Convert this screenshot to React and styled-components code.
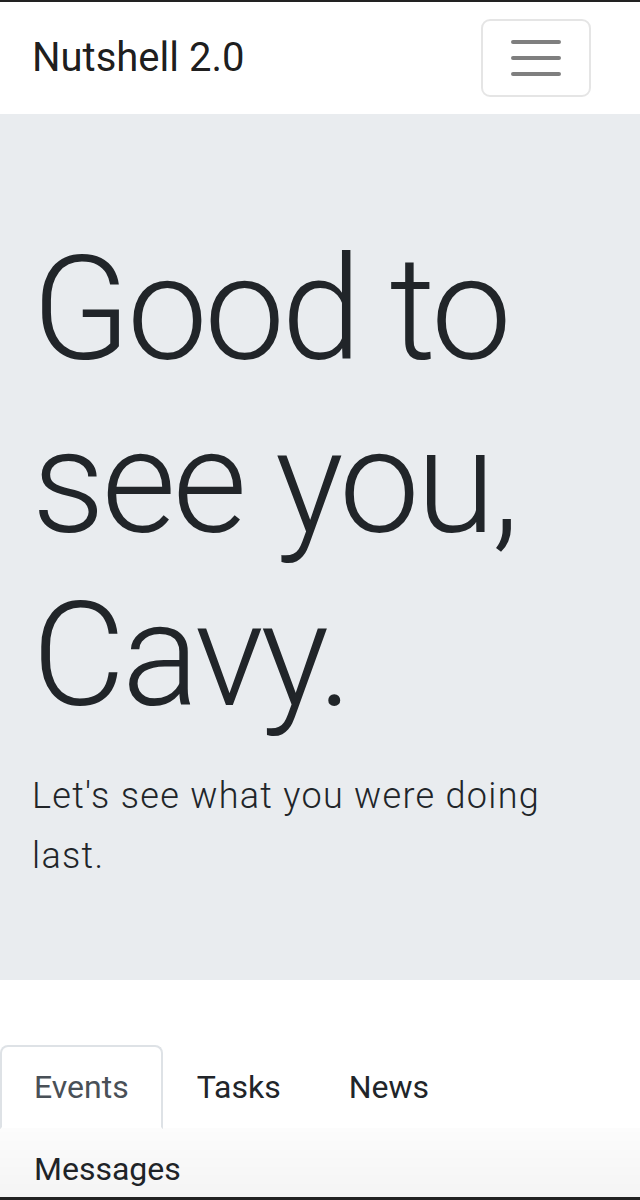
import React from 'react'
import styled, { createGlobalStyle } from 'styled-components'

const GlobalStyle = createGlobalStyle`
  * {
    box-sizing: border-box;
  }
  body {
    margin: 0;
    background: #fff;
    color: #212529;
    font-family: Roboto, "Noto Sans", "Liberation Sans", sans-serif;
  }
`

const Page = styled.div`
  border-top: 2px solid #222;
  min-height: 1200px;
`

const Navbar = styled.nav`
  display: flex;
  align-items: center;
  justify-content: space-between;
  height: 112px;
  padding: 0 49px 0 32px;
`

const Brand = styled.a`
  font-size: 40px;
  line-height: 60px;
  font-weight: 400;
  color: rgba(0, 0, 0, 0.9);
  text-decoration: none;
`

const Toggler = styled.button`
  display: flex;
  align-items: center;
  justify-content: center;
  width: 110px;
  height: 78px;
  padding: 0;
  background: transparent;
  border: 2px solid rgba(0, 0, 0, 0.1);
  border-radius: 9px;
`

const Jumbotron = styled.header`
  background: #e9ecef;
  padding: 110px 32px 94px;
  margin-bottom: 65px;
`

const Display = styled.h1`
  margin: 0 0 24px;
  font-size: 144px;
  line-height: 1.2;
  font-weight: 300;
  letter-spacing: -3.5px;
`

const Lead = styled.p`
  margin: 0;
  font-size: 36px;
  line-height: 60px;
  font-weight: 300;
  letter-spacing: 1.3px;
`

const Tabs = styled.ul`
  display: flex;
  flex-wrap: wrap;
  list-style: none;
  margin: 0;
  padding: 0;
  border-bottom: 2px solid #dee2e6;
`

const TabLink = styled.a`
  display: block;
  padding: 16px 32px;
  font-size: 32px;
  line-height: 48px;
  text-decoration: none;
  border: 2px solid transparent;
  border-radius: 8px 8px 0 0;
  margin-bottom: -2px;
  color: ${p => (p.$active ? '#495057' : '#212529')};
  background: ${p => (p.$active ? '#fff' : 'transparent')};
  border-color: ${p => (p.$active ? '#dee2e6 #dee2e6 #fff' : 'transparent')};
`

const BottomChrome = styled.div`
  position: fixed;
  left: 0;
  right: 0;
  bottom: 0;
  height: 72px;
  pointer-events: none;
  background: linear-gradient(to bottom, rgba(0, 0, 0, 0.012), rgba(0, 0, 0, 0.045));
  border-bottom: 3px solid #222;
`

const MenuIcon = () => (
  <svg width="60" height="60" viewBox="0 0 30 30">
    <path
      d="M3.5 7h23M3.5 15h23M3.5 23h23"
      stroke="rgba(0,0,0,0.5)"
      strokeWidth="2"
      strokeLinecap="round"
    />
  </svg>
)

const tabs = ['Events', 'Tasks', 'News', 'Messages']

const App = () => (
  <Page>
    <GlobalStyle />
    <Navbar>
      <Brand href="#">Nutshell 2.0</Brand>
      <Toggler aria-label="Toggle navigation">
        <MenuIcon />
      </Toggler>
    </Navbar>
    <Jumbotron>
      <Display>Good to see you, Cavy.</Display>
      <Lead>Let's see what you were doing last.</Lead>
    </Jumbotron>
    <Tabs>
      {tabs.map((tab, i) => (
        <li key={tab}>
          <TabLink href="#" $active={i === 0}>{tab}</TabLink>
        </li>
      ))}
    </Tabs>
    <BottomChrome />
  </Page>
)

export default App
